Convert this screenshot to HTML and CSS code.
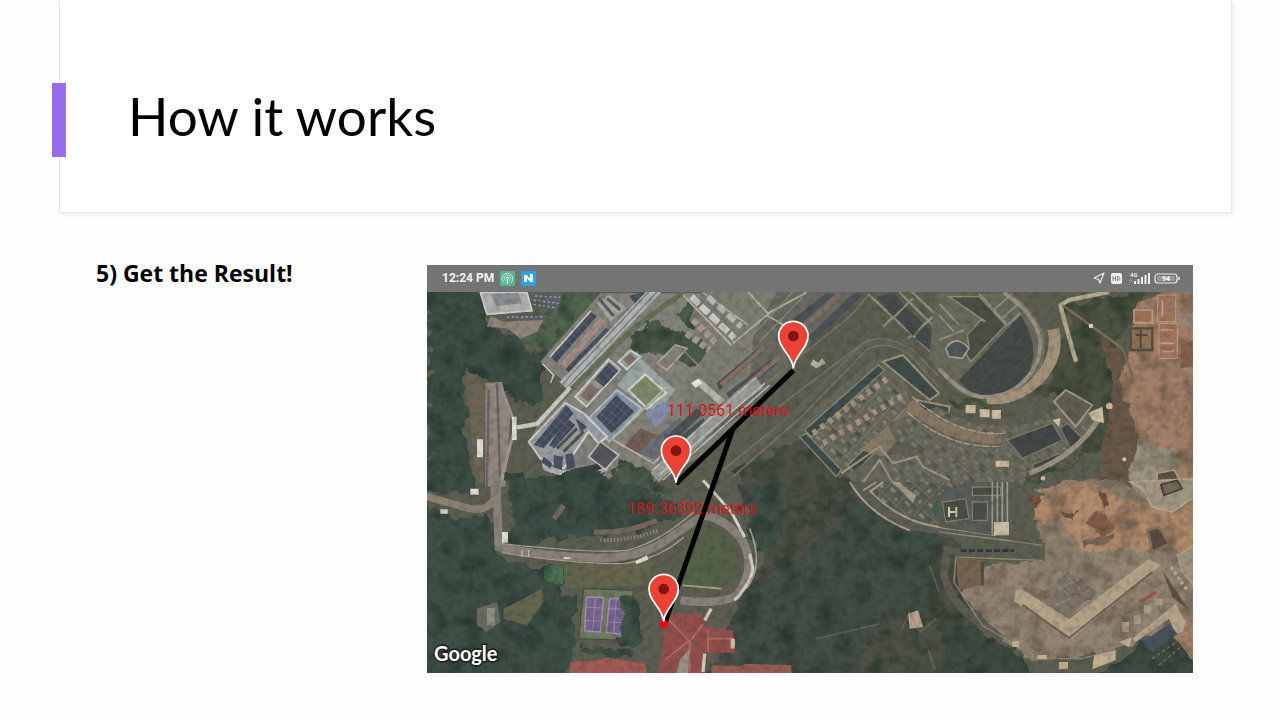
FILE: index.html
```
<!DOCTYPE html>
<html lang="en">
<head>
<meta charset="utf-8">
<meta name="viewport" content="width=device-width, initial-scale=1">
<title>How it works</title>
<link rel="stylesheet" href="styles.css">
</head>
<body>
<header class="banner"><h1 class="title">How it works</h1></header>
<main class="content">
  <p class="step">5) Get the Result!</p>
  <figure class="phone">
    <div class="status">
      <span class="time">12:24 PM</span>
      <svg class="app" viewBox="0 0 15 15" aria-hidden="true"><rect width="15" height="15" rx="1" fill="#55b58e"/><g fill="none" stroke="#d9f2e6"><path d="M4.500 12A5.300 5.300 0 1 1 10.500 12M5.500 9.500A3 3 0 1 1 9.500 9.500" stroke-width=".9"/><path d="M7.500 7V13" stroke-width="1.300"/></g><circle cx="7.500" cy="7" r="1.200" fill="#fff"/></svg>
      <svg class="app" viewBox="0 0 15 15" aria-hidden="true"><rect width="15" height="15" rx="1" fill="#2ba4e3"/><path d="M3 4H6L9 8V3H12V11H9L6 7V11H3Z" fill="#fff"/></svg>
      <svg class="signals" viewBox="0 0 88 15" aria-hidden="true">
        <path d="M1 7L11 2L7 12L5.500 8.500Z" fill="none" stroke="#eee" stroke-width="1.200" stroke-linejoin="round"/>
        <rect x="18" y="2" width="11" height="11" rx="2" fill="#eee"/><path d="M20 5V10M20 7.500H22.500M22.500 5V10M24.500 5.500V9.500H25.500Q28 7.500 25.500 5.500Z" fill="none" stroke="#777" stroke-width=".9"/>
        <text class="net" x="37" y="6">4G</text>
        <path d="M36 10L38 8M37 12L39 9" stroke="#aaa" stroke-width=".8"/>
        <path d="M42 10V13M45.500 8V13M49 6V13M52.500 4V13M56 2V13" stroke="#eee" stroke-width="2"/>
        <rect x="62" y="3" width="22" height="9" rx="3" fill="none" stroke="#eee" stroke-width="1.200"/><path d="M86 6V9" stroke="#eee" stroke-width="1.500"/><rect x="64" y="5" width="18" height="5" rx="1" fill="#999"/><text class="charge" x="69" y="10">94</text>
      </svg>
    </div>
    <svg class="map" viewBox="0 0 2298 1143" role="img" aria-label="Satellite map with measured distances">
      <defs>
        <filter id="foliage" x="-5%" y="-5%" width="110%" height="110%">
          <feTurbulence type="fractalNoise" baseFrequency=".018" numOctaves="5" seed="4" result="n"/>
          <feDisplacementMap in="SourceGraphic" in2="n" scale="70" xChannelSelector="R" yChannelSelector="G" result="d"/>
          <feColorMatrix in="n" values="0 0 0 0 .12  0 0 0 0 .18  0 0 0 0 .15  1.500 0 0 0 -.65" result="s"/>
          <feComposite in="s" in2="d" operator="in" result="c"/>
          <feMerge><feMergeNode in="d"/><feMergeNode in="c"/></feMerge>
        </filter>
        <filter id="rough" x="-5%" y="-5%" width="110%" height="110%">
          <feTurbulence type="fractalNoise" baseFrequency=".015" numOctaves="5" seed="9" result="n"/>
          <feDisplacementMap in="SourceGraphic" in2="n" scale="50" xChannelSelector="R" yChannelSelector="G" result="d"/>
          <feColorMatrix in="n" values="0 0 0 0 .35  0 0 0 0 .3  0 0 0 0 .24  0 1.600 0 0 -.7" result="s"/>
          <feComposite in="s" in2="d" operator="in" result="c"/>
          <feMerge><feMergeNode in="d"/><feMergeNode in="c"/></feMerge>
        </filter>
        <filter id="grain" x="0" y="0" width="100%" height="100%"><feTurbulence type="fractalNoise" baseFrequency=".05" numOctaves="3" seed="2"/><feColorMatrix values="0 0 0 0 .1  0 0 0 0 .1  0 0 0 0 .09  1.800 0 0 0 -.75"/></filter>
        <filter id="soft" x="0" y="0" width="100%" height="100%"><feGaussianBlur stdDeviation="2"/></filter>
        <pattern id="panels" width="24" height="16" patternUnits="userSpaceOnUse" patternTransform="rotate(-48)"><rect width="24" height="16" fill="#454a5b"/><path d="M0 0H24M0 0V16" stroke="#697080" stroke-width="3"/></pattern>
        <pattern id="decks" width="58" height="42" patternUnits="userSpaceOnUse" patternTransform="rotate(42)"><path d="M0 0H58M0 0V42" stroke="#85836f" stroke-width="3"/><path d="M12 12H30V22H12ZM40 25H50V36H40Z" fill="#85806f"/><path d="M32 6H50V16H32Z" fill="#4f544b"/></pattern>
        <g id="pin"><path d="M0 0C-3 -42 -44 -58 -44 -97A44 44 0 0 1 44 -97C44 -58 3 -42 0 0Z" fill="#ea4335" stroke="#fff" stroke-width="5"/><circle cy="-97" r="16" fill="#811411"/></g>
      </defs>
      <g filter="url(#soft)">
        <rect width="2298" height="1143" fill="#5c5e51"/>
        <g filter="url(#foliage)">
          <path d="M0 -20H165L195 110 270 125 285 165 370 190 340 330 280 335 255 290 200 270 130 235 110 260 115 400 150 600 0 610Z" fill="#3d4e44"/>
          <path d="M270 150L350 95 400 0H530L370 190Z" fill="#546650"/>
          <path d="M1060 460L1180 430 1230 540 1430 640 1520 720 1620 780 1640 1000 1760 1200H820L930 960 1000 800 980 640 930 540Z" fill="#4c5045"/>
          <path d="M1280 620L1440 720 1500 760 1480 920 1350 1000 1230 1200H960L910 1010 930 910 1050 850 1140 790Z" fill="#444f47"/>
          <path d="M1440 720H1530V930L1470 980 1420 900ZM930 570L1060 590 1070 700 1000 780 960 700Z" fill="#425047"/>
          <path d="M1536 1000L1640 1010 1800 1100 1830 1200H1536ZM2120 1070L2330 980V1200H1960Z" fill="#414b41"/>
          <path d="M1910 40L2170 -10 2110 90 2070 160 2070 430 1850 570H1760L1950 500 2030 370 1890 300 1600 350 1560 320 1700 330 1860 260 1910 120Z" fill="#4d5341"/>
        </g>
        <g filter="url(#rough)">
          <path d="M2130 30L2350 -40V1150L2200 1000 1900 620 1810 590 1920 560 2110 590 2120 460 2080 250Z" fill="#a28069"/>
          <path d="M1820 620L1990 560 2350 640V900L2240 1010 2030 1080 1840 1110 1700 1030 1600 900 1680 820 1850 800Z" fill="#928473"/>
          <path d="M1820 620L1980 570 2080 620 2150 640 2350 630V780L1980 770 1900 690 1820 690Z" fill="#b18b6d"/>
          <path d="M2110 450L2250 470 2280 640 2200 650 2110 590Z" fill="#9c9380"/>
          <path d="M2020 110L2070 170 2100 330 2130 440 2110 570 2010 570 2060 300Z" fill="#6a5a4b"/>
        </g>
        <!-- north-west campus -->
        <g transform="translate(0,-6)">
          <path d="M340 215L520 10H900V380L740 500 690 560 600 520 540 576 500 545 400 550 305 460 330 410 430 290Z" fill="#83837b"/>
          <path d="M160 8H300L315 62 180 73Z" fill="#aeb0ae" stroke="#d2d2cd" stroke-width="5"/><path d="M190 12L275 8 285 40 210 48Z" fill="#898e91"/>
          <path d="M315 10L410 8 390 62 316 48ZM230 73L365 75 345 91 230 88Z" fill="#5b6164"/>
          <path d="M325 18L400 22M320 30L395 40M320 43L390 54M240 82L350 80" stroke="#a3a6a5" stroke-width="4" stroke-dasharray="7 7"/>
          <path d="M190 78L230 95 350 90 330 125 280 146 240 115 180 110Z" fill="#908579"/>
          <path d="M115 240L175 280 170 576H145L130 400Z" fill="#6b6654"/>
          <path d="M175 280L225 275 250 380 235 590H175Z" fill="#91877e"/><path d="M210 280L220 590M185 300L180 590" stroke="#696465" stroke-width="7"/><path d="M222 290L265 405 218 590" fill="none" stroke="#a0978e" stroke-width="9"/>
          <path d="M255 380H269V450H255ZM150 448H168V502H150Z" fill="#deded8"/>
          <path d="M370 200L490 65 510 78 388 218ZM415 238L538 113 552 125 431 252ZM605 18L640 8 670 12 625 40Z" fill="url(#panels)"/>
          <path d="M400 222L518 84 535 94 418 232Z" fill="#a38d88"/>
          <path d="M368 202L492 62M345 220L380 255 370 280" fill="none" stroke="#c9c8bf" stroke-width="5"/>
          <path d="M510 40L545 15 600 55 550 95Z" fill="#a9a69d"/><path d="M515 25L560 78M540 25L580 60" stroke="#5a5f60" stroke-width="9"/>
          <path d="M410 288L690 -5" stroke="#b0b4b2" stroke-width="34"/><path d="M400 290L675 -5M420 292L700 -5" stroke="#777f7e" stroke-width="4"/>
          <path d="M325 404L620 115 768 8" stroke="#68705a" stroke-width="16" fill="none"/>
          <path d="M270 412L330 402 430 292" fill="none" stroke="#c9c8bf" stroke-width="13"/><path d="M435 345L640 127" stroke="#858670" stroke-width="5"/>
          <g filter="url(#foliage)"><path d="M600 150L680 100 760 130 850 170 800 230 740 210 700 200 620 175ZM740 70L800 30 860 90 790 110ZM540 570L590 510 680 550 740 610H540Z" fill="#4c5b4b"/></g>
          <path d="M445 320L545 208 580 238 478 350ZM575 215L610 180 640 200 600 238Z" fill="#9a998e" stroke="#ccd1cf" stroke-width="6"/>
          <path d="M502 268L546 218 574 243 530 290Z" fill="url(#panels)"/><path d="M460 318L490 280 515 300 485 335ZM590 210L610 190 628 207 606 226Z" fill="#817066"/>
          <path d="M485 385L570 300 645 355 547 455Z" fill="#8b96a5" stroke="#b5bec2" stroke-width="6"/><path d="M508 380L568 315 622 365 554 430Z" fill="url(#panels)"/>
          <path d="M570 285L640 205 745 300 690 370 600 310Z" fill="#9ba7a3"/><path d="M605 300L655 253 717 308 660 356Z" fill="#7e8968" stroke="#d1d4ca" stroke-width="7"/>
          <path d="M655 370L710 335 740 355 685 414Z" fill="#858da9"/>
          <path d="M305 455L415 338 470 370 540 440 515 460 485 425 410 535 340 505Z" fill="#989ba1" stroke="#d0d1cf" stroke-width="6"/>
          <path d="M320 465L417 345 440 370 350 475ZM366 466L420 385 445 405 382 475ZM445 385L480 410 462 427Z" fill="url(#panels)"/>
          <path d="M390 475L450 415M410 485L470 425" stroke="#515647" stroke-width="9"/>
          <path d="M340 505Q400 560 470 535L520 525 545 540Q440 580 350 540Z" fill="#b0b4b6"/><path d="M350 500L375 520 370 535 342 517ZM380 495L408 500 405 540 380 532ZM415 493L438 490 445 530 420 540Z" fill="#4c5261"/>
          <path d="M485 500L520 455 575 495 535 538Z" fill="#55565d" stroke="#bec0bf" stroke-width="5"/>
          <path d="M425 540L510 522 525 535 480 557Z" fill="#3b3f43"/>
          <path d="M590 470L640 415 690 435 630 500Z" fill="#725f56"/><path d="M635 490L760 380 768 430 690 510Z" fill="#686c73"/><path d="M550 445L680 520 768 430M575 430L720 290" fill="none" stroke="#b7b4aa" stroke-width="6"/>
          <path d="M690 220L745 165 780 175 720 240Z" fill="#827e79" stroke="#b1a898" stroke-width="5"/>
        </g>
        <g transform="translate(768,-6)">
          <path d="M60 -10H520L250 330 50 500 -90 576 -70 500 10 400 0 300 80 170 20 90Z" fill="#7e7d73"/>
          <path d="M290 -10H520L250 330 60 450 200 300 210 140Z" fill="#686961"/>
          <path d="M100 280L225 175 240 185 110 300ZM130 310L270 205 285 220 145 335ZM320 95L430 10 455 12 340 115ZM375 140L510 12 540 15 390 155ZM-60 480L60 385 75 405 -40 500ZM-55 445L40 355 60 370 -30 460Z" fill="#4d5257"/>
          <path d="M340 130L470 15M115 285L245 170M150 320L290 200" stroke="#846f64" stroke-width="14"/>
          <path d="M0 15L145 165M60 8L195 105M150 160L270 60M190 0L255 70 370 8M250 75L310 110" fill="none" stroke="#b0ada1" stroke-width="6"/>
          <path d="M25 20L155 145" stroke="#c9cbc7" stroke-width="20" stroke-dasharray="32 8"/><path d="M75 20L175 110" stroke="#b6b6b0" stroke-width="18" stroke-dasharray="28 12"/>
          <path d="M30 90L100 160M10 130L80 180" stroke="#a59a91" stroke-width="20" stroke-dasharray="18 8"/>
          <path d="M205 140L330 5M230 155L360 20M0 180L55 235M60 290L120 335M150 145L210 185" stroke="#8e8876" stroke-width="4" fill="none"/>
          <path d="M-85 562L165 325 230 278" fill="none" stroke="#999b97" stroke-width="38"/><path d="M-90 540L220 260M-75 558L245 280M-60 570L260 285" stroke="#bfc1bd" stroke-width="4"/>
          <path d="M30 275L50 265 125 330 110 345Z" fill="#b4b4af"/><path d="M25 280L45 266 57 280 38 294Z" fill="#e2e6e5"/>
          <path d="M390 208L405 218 418 205 428 220 400 235 382 224Z" fill="#adb199"/>
          <path d="M250 280L500 80 560 12M120 540L330 370 540 160Q600 125 690 180L768 260M150 560L350 385 550 180Q610 145 680 195L768 290M280 355L540 160" fill="none" stroke="#787466" stroke-width="5"/>
          <path d="M130 550L330 377 540 172Q600 130 690 190L768 280" fill="none" stroke="#646357" stroke-width="14"/>
          <path d="M330 430L400 350 570 210 620 205 700 330 600 450 480 550Z" fill="#66665a"/>
          <path d="M360 430L590 240 680 330 490 535Z" fill="url(#decks)"/>
          <path d="M365 420L585 225 605 240 385 440ZM350 440L370 430 475 540 460 560ZM495 525L680 345 700 360 515 550Z" fill="#414d4b" stroke="#898a7b" stroke-width="4"/>
          <path d="M390 430L620 260M420 460L670 310" stroke="#a5957f" stroke-width="18" stroke-dasharray="14 15"/>
          <path d="M600 215L660 195 768 310 740 330ZM700 330L800 350 790 420 720 380Z" fill="#414c49" stroke="#9b947e" stroke-width="6"/>
          <path d="M530 480L680 350 720 365 600 500Z" fill="#837966"/>
          <path d="M555 12L765 205M650 8L800 155M680 0L830 140M600 110L690 25M675 145L750 80" stroke="#918e7b" stroke-width="7" fill="none"/>
          <path d="M580 20L630 8 665 45 630 80ZM640 85L670 50 720 100 690 138ZM695 145L728 105 768 145 748 185Z" fill="#454c4b"/>
          <path d="M490 550L590 500 700 480 1040 530 1010 610 700 600 520 600Z" fill="#67665b"/><path d="M600 500L700 480 1040 540 1010 600 620 590Z" fill="url(#decks)" opacity=".7"/>
          <path d="M475 550L590 470 630 520 700 500 720 530 800 570M530 590L590 510 630 580 710 600" fill="none" stroke="#9d9682" stroke-width="6"/>
        </g>
        <g transform="translate(1536,-6)">
          <path d="M-10 10H220L320 130 300 250 180 335 60 310 -30 210Z" fill="#69695c"/>
          <path d="M60 270L245 75Q305 170 270 245Q210 325 140 316Q85 310 60 270Z" fill="#454a48"/>
          <path d="M90 255L245 95M115 285L270 125M160 300L285 180" stroke="#4f5451" stroke-width="3"/>
          <path d="M30 20H120L200 105 95 215 80 190 90 170 85 135 125 90 140 95Z" fill="#4c4f46" stroke="#918e78" stroke-width="4"/>
          <path d="M195 8Q335 105 295 215Q240 330 120 320Q65 310 0 235" fill="none" stroke="#989080" stroke-width="12"/>
          <path d="M215 12Q345 110 305 225Q250 325 160 326" fill="none" stroke="#77776a" stroke-width="5"/>
          <path d="M325 120L360 115Q382 195 320 270Q245 350 145 342L140 322Q245 322 300 240Q340 185 325 120Z" fill="#a39178"/>
          <path d="M120 10L205 105M165 60L220 10M190 85L245 35M205 105L245 70M0 40L60 105M0 75L45 125M0 150L75 120" stroke="#8f8f7e" stroke-width="6"/>
          <path d="M20 175Q50 130 90 175L70 205 30 200Z" fill="#51585a" stroke="#a9a591" stroke-width="5"/>
          <path d="M412 215L405 195 370 70 365 45 390 30 510 6" fill="none" stroke="#b1aa8e" stroke-width="13"/><path d="M370 45L550 175 585 270" fill="none" stroke="#7c6e5e" stroke-width="7"/>
          <path d="M0 350Q80 410 210 405L280 400 370 345 450 370 495 385 400 480 280 550 110 530 0 500 -130 450 -160 400Z" fill="#67665a"/>
          <path d="M0 350Q80 410 210 405L280 400 370 345 450 370 495 385 400 480 280 550 110 530 0 500 -130 450 -160 400Z" fill="url(#decks)" opacity=".6"/>
          <path d="M-90 340Q30 450 185 445" fill="none" stroke="#877664" stroke-width="32"/><path d="M-95 365Q30 480 190 468M-80 320Q50 440 200 430" fill="none" stroke="#aba18c" stroke-width="4" stroke-dasharray="24 4"/>
          <path d="M345 335L380 300 460 345 410 410Z" fill="#605e4e" stroke="#a09a82" stroke-width="6"/>
          <path d="M205 450L340 400 370 450 250 505ZM365 415L385 400 430 445 395 475ZM280 525L360 490 385 500 290 545Z" fill="#424847" stroke="#80786a" stroke-width="4"/>
          <path d="M270 550Q410 500 485 380" fill="none" stroke="#9b9280" stroke-width="15"/>
          <path d="M80 345H110V370H80ZM122 358H152V382H122ZM158 360H186V386H158ZM447 370L490 350 495 400 460 390ZM170 512H210V530H170ZM340 390L365 385 360 410Z" fill="#cbbca3"/>
          <circle cx="511" cy="348" r="10" fill="#c9b48d"/><circle cx="312" cy="565" r="7" fill="#d0c5ab"/><circle cx="556" cy="508" r="6" fill="#d5c4ac"/><circle cx="456" cy="108" r="7" fill="#d9cec0"/>
          <path d="M585 60H640V98H585Z" fill="#9a7158" stroke="#bf9f82" stroke-width="5"/><path d="M575 115H640V180H575Z" fill="#8d7456" stroke="#5a4d3f" stroke-width="7"/><path d="M590 135H625M605 120V175" stroke="#514739" stroke-width="6"/>
          <path d="M655 15H710V95H655ZM660 100H715V205H660Z" fill="#a07560" stroke="#bd9d82" stroke-width="3"/><path d="M665 120H705M665 160H705M670 185H705M670 30V85" stroke="#c59c80" stroke-width="5"/><path d="M720 70H765V105H720Z" fill="#938577"/><path d="M725 165L765 150V230L725 235Z" fill="#85604d"/>
          <path d="M655 550L705 540 725 576H655Z" fill="#5f5546" stroke="#b7a083" stroke-width="4"/>
        </g>
        <!-- south-west woods, loop road and courts -->
        <g transform="translate(0,570)">
          <g filter="url(#foliage)"><path d="M-20 -40H120V40L50 30 -20 20ZM-20 75L120 110 200 105 205 210 265 250 400 255 410 330 455 340 440 470 410 610H-20ZM235 -30H520L740 60 750 110 640 145 480 160 300 185 250 175Z" fill="#3f5047"/></g>
          <path d="M230 380L345 320 350 360 300 430 230 410ZM410 250L680 240 650 310 415 320Z" fill="#64664f"/>
          <path d="M-5 42L110 75Q170 95 200 55L205 -10" fill="none" stroke="#8d8276" stroke-width="22"/>
          <path d="M208 -15L215 195Q360 225 520 228Q660 225 730 165L830 100Q900 110 948 180Q990 260 930 340Q880 370 760 355" fill="none" stroke="#88827b" stroke-width="25"/>
          <path d="M225 212Q430 245 590 245 700 230 770 165M225 185Q500 215 600 205 700 180 800 90" fill="none" stroke="#a89f8e" stroke-width="4"/>
          <path d="M500 150Q600 155 690 115M380 110L410 70" fill="none" stroke="#746860" stroke-width="16"/><path d="M520 175Q620 175 695 145" fill="none" stroke="#8d8273" stroke-width="12" stroke-dasharray="5 5"/>
          <path d="M800 160Q880 120 920 190Q950 300 850 325L768 310 730 260Z" fill="#566149"/>
          <path d="M625 237L660 220 664 233 628 247ZM40 82H62V95H40ZM130 20H155V38H130ZM410 226H430V231H410ZM225 150H243V182H225Z" fill="#dfddd5"/>
          <path d="M285 205V225M305 205V225" stroke="#cdbc9e" stroke-width="4"/>
          <path d="M150 380L210 360 220 420 180 450 150 430Z" fill="#676b5d"/><path d="M180 378H203V430H180Z" fill="#908f86"/>
          <g filter="url(#foliage)"><path d="M355 255H405V315L355 320Z" fill="#4c7657"/></g>
          <path d="M470 320L620 325 590 475 455 470Z" fill="#6f7a5e" stroke="#404c3d" stroke-width="3"/>
          <path d="M478 345L530 347 520 450 473 447ZM548 350L600 350 590 457 538 452Z" fill="#77658f" stroke="#a493b6" stroke-width="4"/><path d="M505 347L497 448M476 375L525 378M475 415L522 417M568 352L560 455M545 380L595 382M542 420L590 422" stroke="#ac9cbd" stroke-width="2"/>
          <g filter="url(#foliage)"><path d="M575 350Q635 335 655 385L650 480 600 495 570 460ZM465 500H620V525H465Z" fill="#425248"/></g>
          <path d="M430 540L520 535 535 527 655 545 660 580H430Z" fill="#a25b55"/>
        </g>
        <g transform="translate(768,570)">
          <path d="M60 -5L145 90 185 165M200 215L210 260Q205 300 155 355" fill="none" stroke="#d2d1c7" stroke-width="9"/><path d="M0 310L115 320M200 140Q245 250 190 320" fill="none" stroke="#aaa492" stroke-width="5"/>
          <path d="M-65 395L55 393 68 435 150 445 158 512 70 512 55 580H-75L-60 470Z" fill="#92504d"/>
          <path d="M-55 400L20 480 60 425M20 480V570M-50 530L20 475M75 470H150M75 445V510" fill="none" stroke="#ae6c66" stroke-width="5"/><path d="M-10 535L20 500 15 576H-20Z" fill="#999187"/>
          <path d="M85 550L175 553 185 545 325 550V580H85Z" fill="#955e54"/><path d="M143 470H156V500H143Z" fill="#d2b4a6"/><path d="M85 380L65 415M65 515L60 570" stroke="#d1c7b9" stroke-width="10"/>
          <path d="M500 0Q550 90 675 145L768 155 850 170 970 160 1000 0Z" fill="#5c5e55"/><path d="M560 30Q650 110 768 130L930 160V0H600Z" fill="url(#decks)"/>
          <path d="M500 0Q560 100 680 145M560 25Q650 120 768 135L940 160M540 25L580 0M560 30L600 0" fill="none" stroke="#a89e89" stroke-width="6"/>
          <path d="M625 0L650 20 690 65 700 40 670 20 650 0Z" fill="#a49b86"/><path d="M745 80L768 40 790 50 760 120Z" fill="#496050"/>
          <path d="M675 395L705 385 720 435 680 440Z" fill="#b9a38b"/><path d="M655 445L680 390 710 450 760 410M735 500L755 560M740 250L768 330M400 470L590 425" fill="none" stroke="#8d8473" stroke-width="6" opacity=".35"/>
        </g>
        <g transform="translate(1536,570)">
          <path d="M0 40L80 0H200V60L160 160 0 135Z" fill="#585e57"/><path d="M10 60L80 50 90 110 20 120ZM100 15H185V40H100ZM100 60H145V115H100Z" fill="#474e48" stroke="#857f71" stroke-width="4"/>
          <path d="M30 75V105M52 75V105M30 90H52" stroke="#d8caae" stroke-width="6"/><path d="M160 0V155M175 0V155M190 0V155M205 0V155" stroke="#a29b8a" stroke-width="5"/><path d="M165 120H210V160H165Z" fill="#c9bda3"/>
          <path d="M225 0L240 200 305 195V225L120 220 25 205 15 280Q40 380 150 440L190 475" fill="none" stroke="#5d5c51" stroke-width="24"/><path d="M0 150L240 180 310 190M310 235L50 225 45 300 130 430 300 530 430 530 520 505" fill="none" stroke="#8f8874" stroke-width="4"/>
          <path d="M65 206H225" stroke="#34383a" stroke-width="8" stroke-dasharray="18 7"/><path d="M50 225L130 235 125 310 60 325Z" fill="#756450"/><path d="M130 240V310" stroke="#51523e" stroke-width="9"/>
          <path d="M230 325L250 322 390 412 630 230 665 250 400 468 225 358Z" fill="#b3a389"/><path d="M250 368L390 468 640 270" fill="none" stroke="#706553" stroke-width="6"/>
          <g filter="url(#rough)"><path d="M300 340L370 255 440 300 480 330 390 405Z" fill="#7e7468"/></g><path d="M320 340L420 290M350 370L460 320M345 300L390 340M375 270L430 330" stroke="#968978" stroke-width="4" stroke-dasharray="12 8"/>
          <path d="M575 0L610 20 640 75 700 90 765 45V-10Z" fill="#a19680" stroke="#b3a68b" stroke-width="5"/><path d="M665 8L715 -5 730 20 675 40Z" fill="#73685a" stroke="#40382f" stroke-width="4"/>
          <path d="M625 145L660 135 690 185 640 210Z" fill="#5b4b3f" stroke="#817360" stroke-width="8"/>
          <g filter="url(#rough)"><path d="M450 115L490 85 530 135 480 165Z" fill="#855e4a"/><path d="M430 180L530 145 525 165 440 200Z" fill="#776756"/>
          <path d="M475 35L495 30 510 70 495 80ZM370 80L410 90 405 107 380 97ZM270 40H300V65H280Z" fill="#725040"/></g>
          <path d="M600 355L650 325 655 335 608 362Z" fill="#9b5a4b"/><path d="M580 470L710 365 720 385 740 420 730 450 710 455 690 410 590 480Z" fill="#b5a58b"/><path d="M610 480L690 425 715 455 640 510Z" fill="#48525a"/>
          <path d="M670 265L750 385 700 345Z" fill="#5d5245"/><path d="M715 220L765 190V310L730 270Z" fill="#9d917c" stroke="#b4a689" stroke-width="4"/><path d="M695 255L745 325" stroke="#b8ad9a" stroke-width="10" stroke-dasharray="10 8"/>
          <path d="M465 520L530 505V535L460 562ZM360 540H387V562H360ZM295 520L325 518V532H295ZM220 478H240V495H220ZM540 480L580 465 570 495Z" fill="#bfb090"/>
          <path d="M640 530L740 460M660 550L730 490" stroke="#777564" stroke-width="4" stroke-dasharray="10 8"/>
          <path d="M550 420H570V450H550ZM585 400H605V425H585ZM615 370H637V395H615ZM645 350H670V370H645Z" fill="#ac9c84"/>
        </g>
        <rect width="2298" height="1143" filter="url(#grain)" opacity=".24"/>
      </g>
      <path d="M1099 235L747 575M918 410L715 990" fill="none" stroke="#000" stroke-width="15"/>
      <circle cx="710" cy="996" r="13" fill="#e40e12"/>
      <use href="#pin" x="1099" y="229"/><use href="#pin" x="747" y="573"/><use href="#pin" x="710" y="988"/>
      <text class="distance" x="720" y="371">111.0561 meters</text>
      <text class="distance" x="600" y="665">189.36392 meters</text>
      <text class="google" x="21" y="1107">Google</text>
    </svg>
  </figure>
</main>
</body>
</html>
```
FILE: styles.css
```
* { box-sizing: border-box; }
body {
  margin: 0;
  min-height: 100vh;
  background: #fefefe;
  color: #000;
  font-family: Lato, "Open Sans", sans-serif;
}
.banner {
  position: relative;
  margin: 0 48px 0 59px;
  padding: 79px 68px 59px;
  background: #fff;
  border: 1px solid #e6e6e6;
  border-top: 0;
  box-shadow: 2px 2px 4px #eee;
}
.banner::before {
  content: "";
  position: absolute;
  left: -8px;
  top: 83px;
  width: 14px;
  height: 74px;
  background: #986dec;
}
.title {
  margin: 0;
  font-size: 53px;
  line-height: 74px;
  font-weight: 400;
}
.content {
  display: grid;
  grid-template-columns: 331px minmax(0, 1fr);
  padding: 52px 87px 47px 96px;
}
.step {
  margin: 0;
  font: 700 23px/16px "Open Sans", sans-serif;
}
.phone { margin: 0; }
.status {
  display: flex;
  align-items: center;
  gap: 6px;
  height: 27px;
  padding: 0 12px 0 15px;
  background: #747474;
  color: #f3f3f3;
}
.time {
  font: 700 12px/27px Roboto, sans-serif;
}
.app { width: 15px; height: 15px; }
.signals { width: 88px; height: 15px; margin-left: auto; }
.net { font: 700 6px Roboto, sans-serif; fill: #eee; }
.charge { font: 700 7px Roboto, sans-serif; fill: #fff; }
.map { display: block; width: 100%; height: auto; }
.map filter { color-interpolation-filters: sRGB; }
.distance {
  font: 400 48px Roboto, sans-serif;
  fill: #de1016;
  fill-opacity: .92;
}
.google {
  font: 700 60px Lato, sans-serif;
  fill: #fff;
  stroke: #222;
  stroke-width: 10px;
  paint-order: stroke;
}
```
